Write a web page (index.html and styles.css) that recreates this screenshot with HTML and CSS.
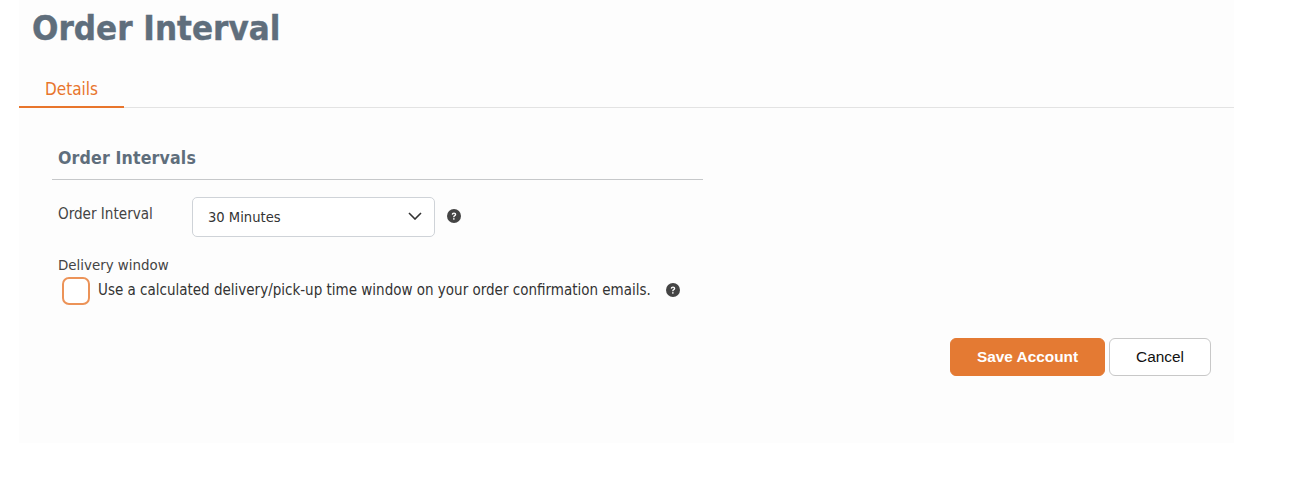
FILE: index.html
```html
<!DOCTYPE html>
<html lang="en">
<head>
<meta charset="utf-8">
<title>Order Interval</title>
<link rel="stylesheet" href="styles.css">
</head>
<body>
<main class="panel">
  <h1 class="title">Order Interval</h1>
  <nav class="tabs"><a class="tab">Details</a></nav>
  <section class="section">
    <h2 class="section-title">Order Intervals</h2>
    <div class="row">
      <label class="label">Order Interval</label>
      <div class="select"><span>30 Minutes</span>
        <svg class="chevron" width="14" height="8" viewBox="0 0 14 8"><path d="M1 1l6 6 6-6" fill="none" stroke="#333" stroke-width="1.6"/></svg>
      </div>
      <svg class="help help-a" width="14" height="14" viewBox="0 0 13 13"><circle cx="6.5" cy="6.5" r="6.5" fill="#444"/><path d="M4.4 5.1c0-1.2.9-1.9 2.1-1.9s2.1.7 2.1 1.8c0 1.5-1.7 1.4-1.7 2.7H5.7c0-1.9 1.6-1.8 1.6-2.6 0-.4-.3-.7-.8-.7s-.9.3-.9.9z" fill="#fff"/><rect x="5.7" y="8.5" width="1.3" height="1.4" fill="#fff"/></svg>
    </div>
    <div class="delivery-label">Delivery window</div>
    <div class="check-row">
      <span class="checkbox"></span>
      <span class="check-text">Use a calculated delivery/pick-up time window on your order confirmation emails.</span>
      <svg class="help help-b" width="14" height="14" viewBox="0 0 13 13"><circle cx="6.5" cy="6.5" r="6.5" fill="#444"/><path d="M4.4 5.1c0-1.2.9-1.9 2.1-1.9s2.1.7 2.1 1.8c0 1.5-1.7 1.4-1.7 2.7H5.7c0-1.9 1.6-1.8 1.6-2.6 0-.4-.3-.7-.8-.7s-.9.3-.9.9z" fill="#fff"/><rect x="5.7" y="8.5" width="1.3" height="1.4" fill="#fff"/></svg>
    </div>
  </section>
  <div class="actions">
    <button class="btn btn-primary">Save Account</button>
    <button class="btn btn-secondary">Cancel</button>
  </div>
</main>
</body>
</html>
```
FILE: styles.css
```css
* { box-sizing: border-box; }
html, body { margin: 0; background: #fff; }
body { font-family: "DejaVu Sans Condensed", "DejaVu Sans", sans-serif; color: #444; padding-left: 19px; height: 490px; overflow: hidden; }
.panel { width: 1215px; height: 443px; background: #fdfdfd; display: flex; flex-direction: column; }
.title { margin: 8px 0 0 13px; font-size: 34.6px; line-height: 40px; font-weight: 700; color: #5f6e7c; -webkit-text-stroke: 0.4px #5f6e7c; }
.tabs { margin-top: 17px; height: 43px; border-bottom: 1px solid #e3e3e3; display: flex; }
.tab { width: 105px; height: 43px; padding: 14px 0 0 26px; font-size: 17px; line-height: 20px; color: #e8752c; border-bottom: 2px solid #e8752c; }
.section { width: 651px; margin: 0 0 0 33px; }
.section-title { margin: 0; padding: 39px 0 10px 6px; height: 72px; border-bottom: 1px solid #c6c8ca; font-size: 17.6px; line-height: 22px; font-weight: 700; letter-spacing: 0.15px; color: #5f6e7c; }
.row { display: flex; align-items: center; margin-top: 17px; height: 40px; }
.label { width: 140px; padding-left: 6px; margin-top: -7px; font-size: 15.1px; line-height: 18px; }
.select { width: 243px; height: 40px; border: 1px solid #cfd3d8; border-radius: 5px; background: #fff; display: flex; align-items: center; justify-content: space-between; padding: 0 12px 2px 15px; font-size: 14.6px; color: #333; }
.help { flex: none; }
.help-a { margin-left: 12px; margin-top: -3px; }
.delivery-label { margin-top: 18px; padding-left: 6px; font-size: 14.9px; line-height: 20px; }
.check-row { display: flex; align-items: center; height: 28px; margin-top: 2px; padding-left: 10px; }
.checkbox { width: 28px; height: 28px; border: 2px solid #ec9358; border-radius: 7px; background: #fff; flex: none; }
.check-text { margin-left: 8px; margin-top: -2px; font-size: 15px; line-height: 18px; color: #333; white-space: nowrap; }
.help-b { margin-left: 15px; margin-top: -2px; }
.actions { display: flex; justify-content: flex-end; gap: 4px; margin-top: 33px; padding-right: 23px; }
.btn { height: 38px; border-radius: 6px; font-family: "Liberation Sans", Arial, sans-serif; font-size: 15.4px; cursor: pointer; }
.btn-primary { width: 155px; background: #e47a33; border: 1px solid #e47a33; color: #fff; font-weight: 700; }
.btn-secondary { width: 102px; background: #fff; border: 1px solid #c8c8c8; color: #111; }
```
